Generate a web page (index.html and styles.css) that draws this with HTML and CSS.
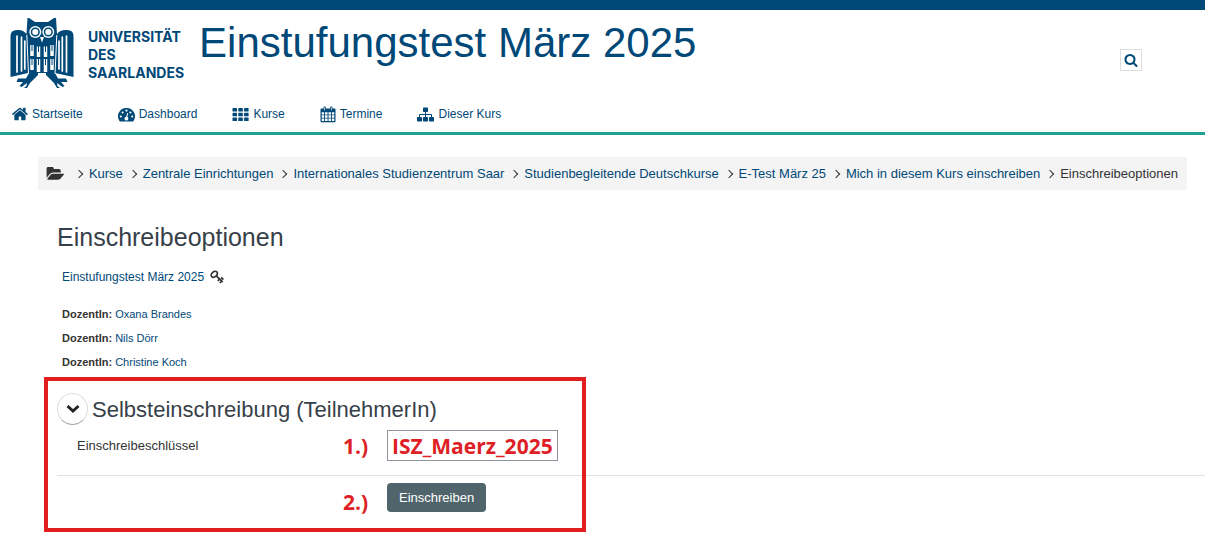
FILE: index.html
```html
<!DOCTYPE html>
<html lang="de">
<head>
<meta charset="utf-8">
<title>Einschreibeoptionen</title>
<link rel="stylesheet" href="styles.css">
</head>
<body>
<header class="header">
  <div class="brand-row">
    <a class="logo" href="#">
      <svg class="owl" viewBox="0 0 65 71" aria-hidden="true">
        <path fill="#004877" d="M19 1L25 5H38L44 1H46L47 17C49 14 53 12.500 57 13Q63.500 13 63.500 19V60L45 56H18L.5 60V19Q.5 13 7 13C11 12.500 14 14 16.500 17L17.500 1z"/>
        <path fill="#004877" d="M19 56L16 61.500H8L6.500 65H13L9.500 69L11.500 70L17 66L16.500 69L14 71H17L20 66L28 58V56zM45 56L48 61.500H56L57.500 65H51L54.500 69L52.500 70L47 66L47.500 69L50 71H47L44 66L36 58V56z"/>
        <path stroke="#fff" stroke-width="1" fill="none" d="M16.800 18L18.500 57M46.800 18L45 57"/>
        <g fill="#fff"><circle cx="25.300" cy="15" r="6"/><circle cx="38.300" cy="15" r="6"/><path d="M30 20h4l-2 5.500z"/></g>
        <g fill="none" stroke="#004877" stroke-width="1.500"><circle cx="25.300" cy="15" r="3.800"/><circle cx="38.300" cy="15" r="3.800"/></g>
        <g stroke="#fff" stroke-width="1.700" stroke-linecap="round"><path d="M7 19v36M11.500 20v34M14.800 24v28M49 24v28M52.300 20v34M56.500 19v36"/></g>
        <g stroke="#fff" stroke-width="3.500"><path d="M22 28v11M28.500 29.500v10.500M35.500 29.500v10.500M42 28v11M22 42v11M28.500 42v13M35.500 42v13M42 42v11"/></g>
        <g stroke="#004877" stroke-width="1"><path d="M22 28v6M28.500 29v6M35.500 29v6M42 28v6M22 42v6M28.500 42v6M35.500 42v6M42 42v6"/></g>
      </svg>
      <span class="logo-text">UNIVERSITÄT<br>DES<br>SAARLANDES</span>
    </a>
    <h1 class="course-title">Einstufungstest März 2025</h1>
    <button class="search" type="button" aria-label="Suche">
      <svg viewBox="0 0 1792 1792" fill="currentColor"><path d="M1216 832q0-185-131.500-316.500t-316.500-131.500-316.500 131.500-131.500 316.500 131.500 316.500 316.500 131.500 316.500-131.500 131.500-316.500zm512 832q0 52-38 90t-90 38q-54 0-90-38l-343-342q-179 124-399 124-143 0-273.500-55.500t-225-150-150-225-55.500-273.500 55.500-273.500 150-225 225-150 273.500-55.500 273.500 55.500 225 150 150 225 55.500 273.500q0 220-124 399l343 343q37 37 37 90z"/></svg>
    </button>
  </div>
  <nav class="nav">
    <a href="#"><svg class="i16" viewBox="80 200 1640 1400" fill="currentColor"><path d="M1472 992v480q0 26-19 45t-45 19h-384v-384h-256v384h-384q-26 0-45-19t-19-45v-480q0-1 .5-3t.5-3l575-474 575 474q1 2 1 6zm223-69l-62 74q-8 9-21 11h-3q-13 0-21-7l-692-577-692 577q-12 8-24 7-13-2-21-11l-62-74q-8-10-7-23.500t11-21.500l719-599q32-26 76-26t76 26l244 204v-195q0-14 9-23t23-9h192q14 0 23 9t9 23v408l219 182q10 8 11 21.500t-7 23.500z"/></svg>Startseite</a>
    <a href="#"><svg class="i17" viewBox="0 0 17 15"><path fill="currentColor" d="M8.500 1A8.300 8.300 0 0 0 1.500 14q.3.500 1 .5h12q.7 0 1-.5A8.300 8.300 0 0 0 8.500 1z"/><g fill="#fff"><circle cx="2.800" cy="9.500" r="1.100"/><circle cx="4.600" cy="5.500" r="1.100"/><circle cx="8.500" cy="3.600" r="1.100"/><circle cx="12.400" cy="5.500" r="1.100"/><circle cx="14.200" cy="9.500" r="1.100"/><path d="M9.200 6l1 .3-.9 3.600a1.900 1.900 0 1 1-1.100-.2z"/></g></svg>Dashboard</a>
    <a href="#"><svg class="i17" viewBox="0 0 17 15" fill="currentColor"><path d="M1 1h3.500q.5 0 .5.500v2.500q0 .5-.5.500H1q-.5 0-.5-.5V1.500Q.5 1 1 1zM6.800 1h3.500q.5 0 .5.500v2.500q0 .5-.5.500H6.800q-.5 0-.5-.5V1.500q0-.5.500-.5zM12.600 1h3.500q.5 0 .5.500v2.500q0 .5-.5.500h-3.500q-.5 0-.5-.5V1.500q0-.5.500-.5z"/><path d="M1 5.700h3.500q.5 0 .5.500v2.500q0 .5-.5.500H1q-.5 0-.5-.5V6.200q0-.5.500-.5zM6.800 5.700h3.500q.5 0 .5.500v2.500q0 .5-.5.500H6.800q-.5 0-.5-.5V6.200q0-.5.500-.5zM12.600 5.700h3.500q.5 0 .5.500v2.500q0 .5-.5.500h-3.500q-.5 0-.5-.5V6.200q0-.5.500-.5z"/><path d="M1 10.400h3.500q.5 0 .5.500v2.500q0 .5-.5.500H1q-.5 0-.5-.5v-2.500q0-.5.500-.5zM6.800 10.400h3.500q.5 0 .5.500v2.500q0 .5-.5.500H6.800q-.5 0-.5-.5v-2.500q0-.5.500-.5zM12.600 10.400h3.500q.5 0 .5.500v2.500q0 .5-.5.500h-3.500q-.5 0-.5-.5v-2.500q0-.5.500-.5z"/></svg>Kurse</a>
    <a href="#"><svg class="i16 tall" viewBox="0 0 16 17"><path fill="currentColor" d="M1.500 2.500h2V1.600q0-1 1.200-1t1.200 1v.9h4.200v-.9q0-1 1.200-1t1.200 1v.9h2q1 0 1 1v11.700q0 1-1 1h-13q-1 0-1-1V3.500q0-1 1-1z"/><path fill="#fff" d="M1.700 6.300h2.400v2.200H1.700zM5 6.300h2.600v2.200H5zM8.500 6.300h2.600v2.200H8.500zM12 6.300h2.300v2.200H12zM1.700 9.300h2.400v2.500H1.700zM5 9.300h2.600v2.500H5zM8.500 9.300h2.600v2.500H8.500zM12 9.300h2.300v2.500H12zM1.700 12.600h2.400V15H1.700zM5 12.600h2.600V15H5zM8.500 12.600h2.600V15H8.500zM12 12.600h2.300V15H12zM4.300 1.600h.8v2.600h-.8zM10.900 1.600h.8v2.600h-.8z"/></svg>Termine</a>
    <a href="#"><svg class="i17" viewBox="0 0 17 15" fill="currentColor"><rect x="6" y=".5" width="5" height="4.500" rx=".7"/><rect x="0" y="10" width="5" height="4.500" rx=".7"/><rect x="6" y="10" width="5" height="4.500" rx=".7"/><rect x="12" y="10" width="5" height="4.500" rx=".7"/><path d="M2 10V8q0-1 1-1h5V4h1v3h5q1 0 1 1v2h-1V8H9v2H8V8H3v2z"/></svg>Dieser Kurs</a>
  </nav>
</header>

<main class="main">
  <nav aria-label="Brotkrumen">
    <ol class="crumbs">
      <li class="crumb-root"><svg class="folder" viewBox="0 200 1943 1340" fill="currentColor"><path d="M1943 952q0 31-31 66l-336 396q-43 51-120.500 86.500t-143.500 35.500h-1088q-34 0-60.500-13t-26.500-43q0-31 31-66l336-396q43-51 120.500-86.500t143.500-35.500h1088q34 0 60.500 13t26.500 43zm-343-344v160h-832q-94 0-197 47.500t-164 119.500l-337 396-5 6q0-4-.5-12.500t-.5-12.500v-960q0-92 66-158t158-66h320q92 0 158 66t66 158v32h544q92 0 158 66t66 158z"/></svg></li>
      <li><a href="#">Kurse</a></li>
      <li><a href="#">Zentrale Einrichtungen</a></li>
      <li><a href="#">Internationales Studienzentrum Saar</a></li>
      <li><a href="#">Studienbegleitende Deutschkurse</a></li>
      <li><a href="#">E-Test März 25</a></li>
      <li><a href="#">Mich in diesem Kurs einschreiben</a></li>
      <li>Einschreibeoptionen</li>
    </ol>
  </nav>

  <section class="content">
    <h2 class="page-title">Einschreibeoptionen</h2>
    <div class="course">
      <a href="#">Einstufungstest März 2025</a>
      <svg class="key" viewBox="0 0 14 14" fill="none" stroke="currentColor" stroke-width="1.700"><ellipse cx="4.300" cy="4.200" rx="3.500" ry="2.500" transform="rotate(-40 4.300 4.200)"/><path d="M6.300 5.800l6.400 6.300M9.300 9.300L7.800 11M11 7.500l2.400 2M11.300 11.200l-1.500 1.700"/></svg>
    </div>
    <ul class="teachers">
      <li><b>DozentIn:</b> <a href="#">Oxana Brandes</a></li>
      <li><b>DozentIn:</b> <a href="#">Nils Dörr</a></li>
      <li><b>DozentIn:</b> <a href="#">Christine Koch</a></li>
    </ul>

    <form class="enrol">
      <div class="enrol-head">
        <button class="toggle" type="button" aria-label="Einklappen"><svg viewBox="0 0 14 10" fill="none" stroke="currentColor" stroke-width="3"><path d="M1.500 2L7 7l5.500-5"/></svg></button>
        <h3>Selbsteinschreibung (TeilnehmerIn)</h3>
      </div>
      <div class="row field-row">
        <label for="key">Einschreibeschlüssel</label>
        <span class="step">1.)</span>
        <input id="key" class="key-input" type="text" value="ISZ_Maerz_2025">
      </div>
      <div class="row action-row">
        <span class="step">2.)</span>
        <button class="submit" type="button">Einschreiben</button>
      </div>
      <div class="marker"></div>
    </form>
  </section>
</main>
</body>
</html>
```
FILE: styles.css
```css
* { box-sizing: border-box; }

body {
  margin: 0;
  background: #fff;
  color: #333;
  font-family: "Liberation Sans", Arial, sans-serif;
  font-size: 13px;
  line-height: 16px;
}

a { color: #004877; text-decoration: none; }
h1, h2, h3, ul, ol { margin: 0; padding: 0; font-weight: 400; list-style: none; }
svg { display: block; flex: none; }

.header {
  border-top: 10px solid #004877;
  border-bottom: 3px solid #1fa193;
}

.brand-row {
  display: flex;
  align-items: flex-start;
  height: 88px;
  padding: 7px 63px 0 10px;
}

.logo { display: flex; gap: 13px; }
.owl { width: 65px; height: 71px; }
.logo-text {
  padding-top: 11px;
  font: 700 14px/18px Inter, sans-serif;
}

.course-title {
  flex: 1;
  margin-left: 15px;
  color: #004877;
  font-size: 42px;
  line-height: 52px;
}

.search {
  display: grid;
  place-items: center;
  width: 22px;
  height: 22px;
  margin-top: 32px;
  padding: 0;
  background: #fff;
  border: 1px solid #ddd;
  color: #004877;
}
.search svg { width: 14px; height: 14px; }

.nav {
  display: flex;
  gap: 35px;
  height: 34px;
  padding: 0 12px;
  font-size: 12px;
}
.nav a { display: flex; align-items: center; height: 32px; gap: 4px; }
.i16 { width: 16px; height: 14px; }
.tall { height: 17px; }
.i17 { width: 17px; height: 15px; }

.main { padding: 22px 0 20px; }

.crumbs {
  display: flex;
  align-items: center;
  justify-content: space-between;
  height: 33px;
  margin: 0 18px 0 38px;
  padding: 0 9px 0 8px;
  background: #f4f4f4;
  white-space: nowrap;
}
.crumbs li { display: flex; align-items: center; }
.crumbs li + li::before {
  content: "";
  width: 5px;
  height: 5px;
  margin-right: 7px;
  border: solid #333;
  border-width: 1px 1px 0 0;
  transform: rotate(45deg);
}
.crumbs .crumb-root { margin-right: 5px; }
.folder { width: 18px; height: 13px; }

.content { padding-left: 57px; }
.page-title {
  margin-top: 30px;
  color: #373f49;
  font-size: 25px;
  line-height: 34px;
}
.course {
  display: flex;
  align-items: center;
  gap: 6px;
  margin-top: 15px;
  padding-left: 5px;
  font-size: 12px;
}
.key { width: 14px; height: 14px; }

.teachers {
  margin-top: 17px;
  padding-left: 5px;
  font-size: 11px;
  line-height: 24px;
}

.enrol { position: relative; padding-top: 19px; }
.enrol-head { display: flex; align-items: center; gap: 4px; }
.enrol-head h3 { color: #373f49; font-size: 22px; line-height: 31px; }
.toggle {
  display: grid;
  place-items: center;
  width: 31px;
  height: 32px;
  padding: 0;
  background: #fff;
  border: 1px solid #ddd;
  border-bottom-color: #aaa;
  border-radius: 50%;
  color: #222;
}
.toggle svg { width: 14px; height: 10px; }

.row {
  display: grid;
  grid-template-columns: 266px 44px 1fr;
  align-items: center;
  padding-left: 20px;
}
.field-row { padding-top: 5px; padding-bottom: 14px; }
.action-row { align-items: start; padding-top: 7px; border-top: 1px solid #dee2e6; }
.step, .key-input {
  color: #de1f26;
  font: 700 21px/28px "Open Sans", "Noto Sans", sans-serif;
}
.action-row .step { grid-column: 2; padding-top: 5px; }
.key-input {
  width: 171px;
  height: 31px;
  padding: 0 4px;
  background: #fff;
  border: 1px solid #8f959e;
}
.submit {
  justify-self: start;
  height: 29px;
  padding: 0 12px;
  background: #50656b;
  border: 0;
  border-radius: 4px;
  color: #fff;
  font: 13px/16px "Liberation Sans", Arial, sans-serif;
}

.marker {
  position: absolute;
  top: 3px;
  left: -13px;
  width: 542px;
  height: 155px;
  border: 4px solid #e31e1e;
  pointer-events: none;
}
```
